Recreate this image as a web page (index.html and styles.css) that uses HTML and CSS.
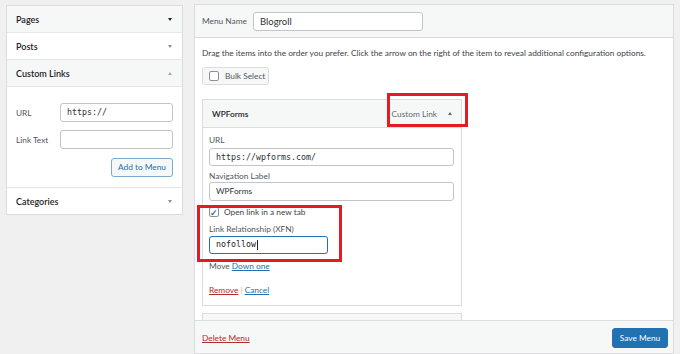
FILE: index.html
```html
<!DOCTYPE html>
<html lang="en">
<head>
    <meta charset="UTF-8">
    <title>Menus</title>
    <link rel="stylesheet" href="styles.css">
</head>
<body>

<div class="page">
    <!-- left: add menu items -->
    <div class="sidebar">
        <div class="acc-head grey">Pages <span class="arrow down dark"></span></div>
        <div class="acc-head">Posts <span class="arrow down"></span></div>
        <div class="acc-head grey">Custom Links <span class="arrow up"></span></div>
        <div class="acc-body">
            <div class="field-row">
                <span class="field-label">URL</span>
                <div class="input mono">https://</div>
            </div>
            <div class="field-row">
                <span class="field-label">Link Text</span>
                <div class="input"></div>
            </div>
            <div class="add-row">
                <div class="btn-secondary">Add to Menu</div>
            </div>
        </div>
        <div class="acc-head last">Categories <span class="arrow down"></span></div>
    </div>

    <!-- right: menu structure -->
    <div class="menu-panel">
        <div class="menu-header">
            <span class="menu-name-label">Menu Name</span>
            <div class="input menu-name">Blogroll</div>
        </div>
        <div class="menu-body">
            <p class="hint">Drag the items into the order you prefer. Click the arrow on the right of the item to reveal additional configuration options.</p>
            <div class="bulk-btn"><span class="checkbox"></span>Bulk Select</div>

            <div class="menu-item">
                <div class="item-head">
                    <span class="item-title">WPForms</span>
                    <span class="item-type">Custom Link <span class="arrow up mid"></span></span>
                </div>
                <div class="item-body">
                    <div class="label">URL</div>
                    <div class="input mono url-input">https://wpforms.com/</div>
                    <div class="label label-gap">Navigation Label</div>
                    <div class="input nav-input">WPForms</div>
                    <div class="check-row"><span class="checkbox checked">&#10003;</span>Open link in a new tab</div>
                    <div class="label label-rel">Link Relationship (XFN)</div>
                    <div class="input mono focus">nofollow<span class="caret"></span></div>
                    <div class="move-row">Move <a class="link">Down one</a></div>
                    <div class="actions"><a class="link danger">Remove</a> <span class="sep">|</span> <a class="link">Cancel</a></div>
                </div>
            </div>

            <!-- next item, mostly hidden under the footer -->
            <div class="menu-item next">
                <div class="item-head"></div>
            </div>
        </div>
        <div class="menu-footer">
            <a class="link danger">Delete Menu</a>
            <div class="btn-primary">Save Menu</div>
        </div>
    </div>

    <!-- annotation boxes -->
    <div class="highlight hl-type"></div>
    <div class="highlight hl-rel"></div>
</div>

</body>
</html>
```

FILE: styles.css
```css
body {
    margin: 0;
    background: #f0f0f1;
    font-family: Lato, "Noto Sans", sans-serif;
    font-size: 8.3px;
    color: #1d2327;
    overflow: hidden;
}

.page {
    position: relative;
    display: flex;
    align-items: flex-start;
    gap: 11px;
    padding: 4px 0 0 6px;
    height: 350px;
}

/* left sidebar */
.sidebar {
    width: 175px;
    margin-top: 1px;
    background: #fff;
    border: 1px solid #dcdcde;
}

.acc-head {
    display: flex;
    justify-content: space-between;
    align-items: center;
    height: 26px;
    padding: 0 10px 0 9px;
    font-weight: 600;
    font-size: 9px;
    border-bottom: 1px solid #e6e6e8;
}
.acc-head.grey {
    background: #f6f7f7;
}
.acc-head.last {
    border-bottom: none;
    border-top: 1px solid #e6e6e8;
}

/* small triangles */
.arrow {
    display: inline-block;
    width: 0;
    height: 0;
    border-left: 2.5px solid transparent;
    border-right: 2.5px solid transparent;
}
.arrow.down {
    border-top: 3px solid #8c8f94;
}
.arrow.up {
    border-bottom: 3px solid #a7aaad;
}
.arrow.down.dark {
    border-top: 3px solid #1d2327;
}
.arrow.mid {
    border-bottom-color: #646970;
}

.acc-body {
    padding: 16px 9px 10px 9px;
}

.field-row {
    display: flex;
    align-items: center;
    margin-bottom: 8px;
}
.field-label {
    width: 44px;
    color: #50575e;
}

.input {
    box-sizing: border-box;
    height: 19px;
    border: 1px solid #c3c4c7;
    border-radius: 3px;
    background: #fff;
    padding: 0 6px;
    line-height: 17px;
    color: #2c3338;
    white-space: nowrap;
}
.field-row .input {
    width: 113px;
}
.mono {
    font-family: "DejaVu Sans Mono", "Liberation Mono", monospace;
    font-size: 8.3px;
}

.add-row {
    display: flex;
    justify-content: flex-end;
    margin-top: 9px;
}
.btn-secondary {
    box-sizing: border-box;
    height: 19px;
    padding: 0 6px;
    line-height: 17px;
    border: 1px solid #7fa9cc;
    border-radius: 3px;
    background: #f6f7f7;
    color: #2271b1;
}

/* right panel */
.menu-panel {
    position: relative;
    box-sizing: border-box;
    width: 480px;
    height: 350px;
    background: #fff;
    border: 1px solid #dcdcde;
    overflow: hidden;
}

.menu-header {
    display: flex;
    align-items: center;
    gap: 7px;
    height: 32px;
    padding: 0 7px;
    background: #f6f7f7;
    border-bottom: 1px solid #dcdcde;
}
.menu-name-label {
    width: 44px;
    color: #50575e;
    white-space: nowrap;
}
.menu-name {
    width: 170px;
    font-size: 9.5px;
}

.menu-body {
    padding: 0 7px;
}

.hint {
    margin: 8px 0 0 0;
    line-height: 14px;
    color: #3c434a;
    white-space: nowrap;
}

.bulk-btn {
    box-sizing: border-box;
    display: flex;
    align-items: center;
    gap: 6px;
    width: 67px;
    height: 18px;
    margin-top: 7px;
    padding-left: 6px;
    border: 1px solid #dcdcde;
    border-radius: 3px;
    background: #f6f7f7;
    color: #50575e;
    white-space: nowrap;
}

.checkbox {
    box-sizing: border-box;
    display: inline-flex;
    justify-content: center;
    align-items: center;
    width: 10px;
    height: 10px;
    border: 1px solid #8c8f94;
    border-radius: 2px;
    background: #fff;
}
.checkbox.checked {
    color: #2271b1;
    font-size: 9px;
    font-weight: bold;
    margin-right: 5px;
}

.menu-item {
    box-sizing: border-box;
    width: 260px;
    margin-top: 14px;
    border: 1px solid #dcdcde;
}
.menu-item.next {
    margin-top: 7px;
}

.item-head {
    display: flex;
    justify-content: space-between;
    align-items: center;
    height: 27px;
    padding: 0 9px 0 9px;
    background: #f6f7f7;
    border-bottom: 1px solid #dcdcde;
}
.item-title {
    font-weight: 600;
}
.item-type {
    display: flex;
    align-items: center;
    gap: 11px;
    color: #646970;
}

.item-body {
    padding: 6px 7px 9px 6px;
}
.label {
    line-height: 13px;
    color: #50575e;
}
.label-gap {
    margin-top: 4px;
}
.url-input {
    width: 245px;
    height: 18px;
    margin-top: 1px;
    line-height: 16px;
}
.nav-input {
    width: 245px;
    margin-top: -1px;
}

.check-row {
    display: flex;
    align-items: center;
    height: 12px;
    margin-top: 5px;
    color: #3c434a;
}

.label-rel {
    margin-top: 5px;
}

.focus {
    width: 119px;
    height: 18px;
    border: 1.5px solid #2271b1;
    line-height: 15px;
    color: #1d2327;
}
.caret {
    display: inline-block;
    width: 1px;
    height: 10px;
    margin-left: 1px;
    background: #1d2327;
    vertical-align: middle;
}

.move-row {
    margin-top: 6px;
    line-height: 12px;
    color: #50575e;
}
.actions {
    margin-top: 12px;
    line-height: 12px;
    color: #c3c4c7;
}

.link {
    color: #2271b1;
    text-decoration: underline;
}
.link.danger {
    color: #b32d2e;
}

.menu-footer {
    position: absolute;
    left: 0;
    right: 0;
    bottom: 0;
    display: flex;
    justify-content: space-between;
    align-items: center;
    height: 30px;
    padding: 2px 5px 0 7px;
    background: #f6f7f7;
    border-top: 1px solid #dcdcde;
}

.btn-primary {
    box-sizing: border-box;
    height: 20px;
    width: 56px;
    text-align: center;
    line-height: 18px;
    border: 1px solid #2271b1;
    border-radius: 3px;
    background: #2271b1;
    color: #fff;
}

/* red annotation boxes over the screenshot */
.highlight {
    position: absolute;
    box-sizing: border-box;
    border: 3px solid #e31b23;
}
.hl-type {
    left: 387px;
    top: 93px;
    width: 81px;
    height: 34px;
}
.hl-rel {
    left: 197px;
    top: 205px;
    width: 145px;
    height: 57px;
}
```
